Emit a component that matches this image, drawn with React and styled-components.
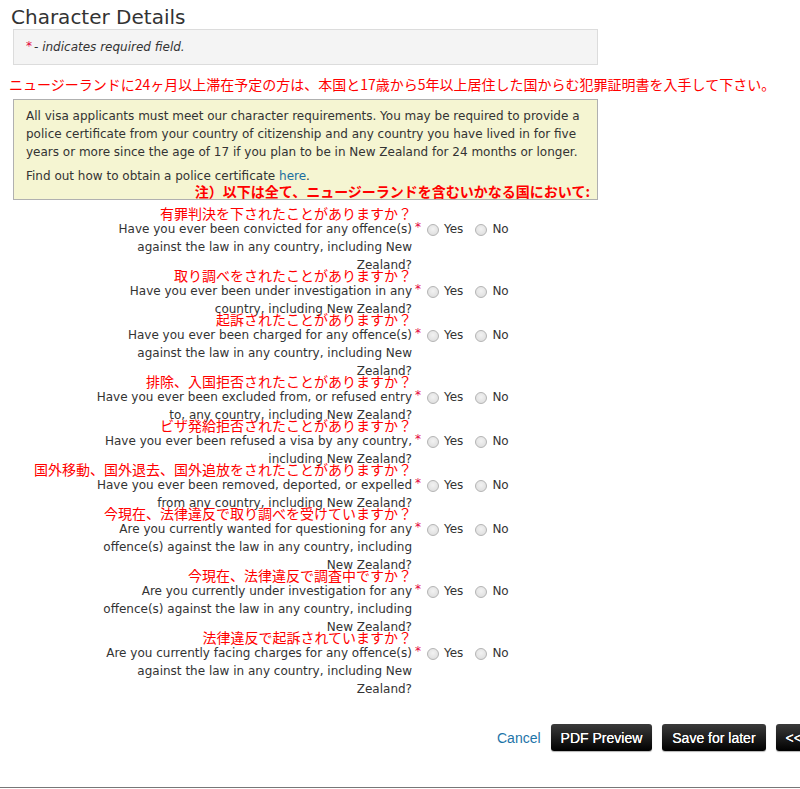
import styled, { createGlobalStyle } from "styled-components";

const GlobalStyle = createGlobalStyle`
  html, body {
    margin: 0;
    padding: 0;
    background: #fff;
    overflow: hidden;
  }
  body {
    font-family: "DejaVu Sans", Verdana, sans-serif;
    color: #333;
  }
`;

const questions = [
  {
    jp: "有罪判決を下されたことがありますか？",
    en: "Have you ever been convicted for any offence(s) against the law in any country, including New Zealand?",
  },
  {
    jp: "取り調べをされたことがありますか？",
    en: "Have you ever been under investigation in any country, including New Zealand?",
  },
  {
    jp: "起訴されたことがありますか？",
    en: "Have you ever been charged for any offence(s) against the law in any country, including New Zealand?",
  },
  {
    jp: "排除、入国拒否されたことがありますか？",
    en: "Have you ever been excluded from, or refused entry to, any country, including New Zealand?",
  },
  {
    jp: "ビザ発給拒否されたことがありますか？",
    en: "Have you ever been refused a visa by any country, including New Zealand?",
  },
  {
    jp: "国外移動、国外退去、国外追放をされたことがありますか？",
    en: "Have you ever been removed, deported, or expelled from any country, including New Zealand?",
  },
  {
    jp: "今現在、法律違反で取り調べを受けていますか？",
    en: "Are you currently wanted for questioning for any offence(s) against the law in any country, including New Zealand?",
  },
  {
    jp: "今現在、法律違反で調査中ですか？",
    en: "Are you currently under investigation for any offence(s) against the law in any country, including New Zealand?",
  },
  {
    jp: "法律違反で起訴されていますか？",
    en: "Are you currently facing charges for any offence(s) against the law in any country, including New Zealand?",
  },
];

const App = () => {
  return (
    <Page>
      <GlobalStyle />
      <Title>Character Details</Title>
      <RequiredBox>
        <Star>*</Star>- indicates required field.
      </RequiredBox>
      <Notice>
        ニュージーランドに24ヶ月以上滞在予定の方は、本国と17歳から5年以上居住した国からむ犯罪証明書を入手して下さい。
      </Notice>
      <InfoBox>
        <p>
          All visa applicants must meet our character requirements. You may be
          required to provide a police certificate from your country of
          citizenship and any country you have lived in for five years or more
          since the age of 17 if you plan to be in New Zealand for 24 months or
          longer.
        </p>
        <p className="find">
          Find out how to obtain a police certificate <a href="#">here</a>.
        </p>
        <BoxNote>注）以下は全て、ニュージーランドを含むいかなる国において:</BoxNote>
      </InfoBox>

      <Questions>
        {questions.map((q, i) => (
          <QuestionRow key={i}>
            <Label>
              <JpLine>
                <span>{q.jp}</span>
              </JpLine>
              <EnText>{q.en}</EnText>
            </Label>
            <ReqMark>*</ReqMark>
            <Options>
              <Radio type="radio" name={`q${i}`} />
              <OptText>Yes</OptText>
              <Radio type="radio" name={`q${i}`} />
              <OptText>No</OptText>
            </Options>
          </QuestionRow>
        ))}
      </Questions>

      <Footer>
        <CancelLink href="#">Cancel</CancelLink>
        <ActionButton>PDF Preview</ActionButton>
        <ActionButton>Save for later</ActionButton>
        <ActionButton>&lt;&lt; Back</ActionButton>
      </Footer>
      <BottomRule />
    </Page>
  );
};

export default App;

const Page = styled.div`
  width: 800px;
  height: 789px;
  overflow: hidden;
  display: flex;
  flex-direction: column;
`;

const Title = styled.h2`
  margin: 4px 0 0 11px;
  font-size: 20px;
  font-weight: normal;
  line-height: 26px;
  color: #333;
`;

const RequiredBox = styled.div`
  margin: -1px 0 0 13px;
  width: 585px;
  box-sizing: border-box;
  height: 36px;
  padding: 0 12px;
  display: flex;
  align-items: center;
  background: #f4f4f4;
  border: 1px solid #dcdcdc;
  font-size: 12px;
  font-style: italic;
`;

const Star = styled.span`
  color: #e4003b;
  font-style: normal;
  margin-right: 2px;
  font-size: 12px;
  align-self: flex-start;
  margin-top: 9px;
`;

const Notice = styled.div`
  margin: 10px 0 0 9px;
  color: #ff0000;
  font-family: "Noto Sans CJK JP", sans-serif;
  font-size: 14px;
  line-height: 18px;
  white-space: nowrap;
`;

const InfoBox = styled.div`
  margin: 6px 0 0 13px;
  width: 585px;
  box-sizing: border-box;
  padding: 7px 7px 1px 12px;
  background: #f5f5d2;
  border: 1px solid #b0b0b0;
  font-size: 12px;
  line-height: 18px;

  p {
    margin: 0;
  }

  p.find {
    margin-top: 6px;
  }

  a {
    color: #1a6fa0;
    text-decoration: none;
  }
`;

const BoxNote = styled.div`
  text-align: right;
  color: #ff0000;
  font-weight: bold;
  font-family: "Noto Sans CJK JP", sans-serif;
  font-size: 14px;
  line-height: 14px;
  margin-top: -1px;
`;

const Questions = styled.div`
  margin-top: 7px;
  display: flex;
  flex-direction: column;
`;

const QuestionRow = styled.div`
  display: flex;
  align-items: flex-start;
  margin-bottom: -5px;
`;

const Label = styled.div`
  margin-left: 87px;
  width: 325px;
  text-align: right;
`;

const JpLine = styled.div`
  display: flex;
  justify-content: flex-end;
  white-space: nowrap;
  color: #ff0000;
  font-family: "Noto Sans CJK JP", sans-serif;
  font-size: 14px;
  line-height: 12px;
  height: 13px;
`;

const EnText = styled.div`
  font-size: 12px;
  line-height: 18px;
  color: #333;
`;

const ReqMark = styled.span`
  color: #e4003b;
  font-size: 12px;
  line-height: 12px;
  margin: 14px 0 0 3px;
  width: 7px;
`;

const Options = styled.div`
  margin-top: 13px;
  height: 18px;
  display: flex;
  align-items: center;
  font-size: 12px;
`;

const Radio = styled.input`
  appearance: none;
  margin: 1px 5px 0 5px;
  width: 12px;
  height: 12px;
  border-radius: 50%;
  border: 1px solid #b4b4b4;
  background: radial-gradient(circle at 50% 40%, #f2f2f2 0%, #dadada 100%);
  box-sizing: border-box;

  & ~ & {
    margin-left: 12px;
  }
`;

const OptText = styled.span`
  color: #333;
`;

const Footer = styled.div`
  margin-top: 31px;
  padding-left: 497px;
  display: flex;
  align-items: center;
  gap: 10px;
  white-space: nowrap;
`;

const CancelLink = styled.a`
  color: #1d74a8;
  text-decoration: none;
  font-family: "Liberation Sans", Arial, sans-serif;
  font-size: 14px;
  margin-right: 0;
`;

const ActionButton = styled.button`
  flex-shrink: 0;
  height: 27px;
  padding: 0 10px;
  border: none;
  border-radius: 3px;
  background: linear-gradient(#3b3b3b, #000);
  color: #fff;
  font-family: "Liberation Sans", Arial, sans-serif;
  font-size: 14px;
  text-shadow: 0 0 0.4px #fff;
  box-shadow: 0 1px 1px rgba(0, 0, 0, 0.3);
`;

const BottomRule = styled.div`
  margin-top: auto;
  margin-bottom: 1px;
  height: 1px;
  background: #777;
`;
